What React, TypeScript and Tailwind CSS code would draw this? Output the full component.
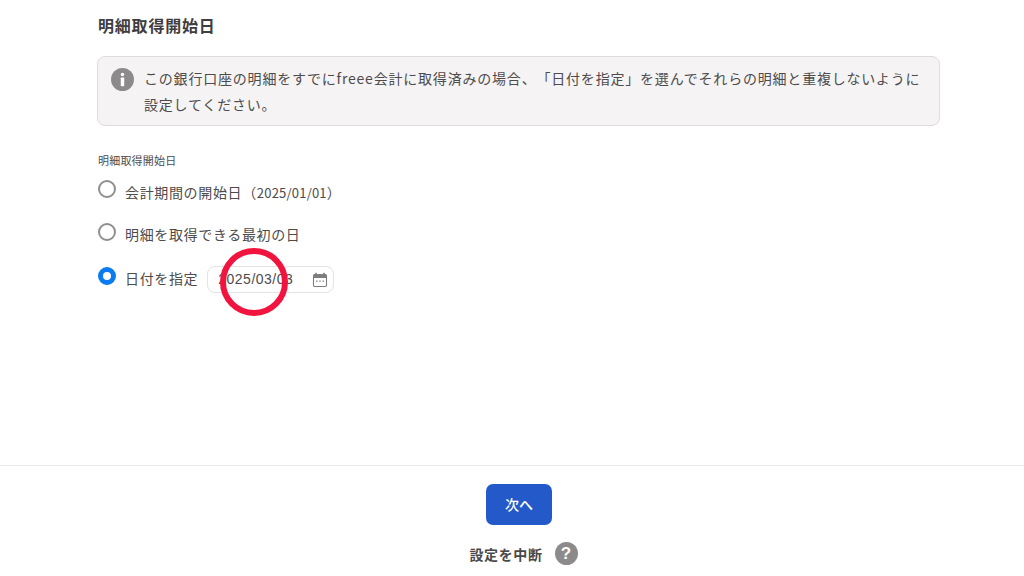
const font = { fontFamily: '"Noto Sans CJK JP", "Liberation Sans", sans-serif' };

function Radio({ checked }: { checked?: boolean }) {
  if (checked) {
    return <span className="block h-[18px] w-[18px] shrink-0 rounded-full border-[5px] border-[#0a7bf0] bg-white" />;
  }
  return <span className="block h-[18px] w-[18px] shrink-0 rounded-full border-2 border-[#8f8f8f] bg-white" />;
}

function CalendarIcon() {
  return (
    <svg viewBox="0 0 16 16" className="h-[16px] w-[16px]" fill="none">
      <rect x="3.2" y="0.8" width="1.6" height="2.5" fill="#7f7d7d" />
      <rect x="11.2" y="0.8" width="1.6" height="2.5" fill="#7f7d7d" />
      <path d="M1.5 6V3.5a1 1 0 0 1 1-1h11a1 1 0 0 1 1 1V6z" fill="#7f7d7d" />
      <rect x="1.5" y="2.5" width="13" height="12" rx="1.2" stroke="#7f7d7d" strokeWidth="1.1" />
      <rect x="4" y="8.5" width="1.6" height="1.4" fill="#9a9898" />
      <rect x="7.2" y="8.5" width="1.6" height="1.4" fill="#9a9898" />
      <rect x="10.4" y="8.5" width="1.6" height="1.4" fill="#9a9898" />
    </svg>
  );
}

export default function App() {
  return (
    <div className="flex h-[576px] w-[1024px] flex-col overflow-hidden bg-white text-[#4d4b4b] [text-spacing-trim:space-all]" style={font}>
      <main className="flex-1 pl-[97px] pr-[84px]">
        <h1 className="mt-[14px] pl-px text-[16px] font-bold leading-[22px] tracking-[0.8px] text-[#3f3d3d]">明細取得開始日</h1>

        <div className="mt-[20px] flex h-[70px] gap-[10px] rounded-[8px] border border-[#dedcdc] bg-[#f5f3f4] pl-[13px] pr-[12px] pt-[8px]">
          <svg viewBox="0 0 24 24" className="mt-[3px] h-[23px] w-[23px] shrink-0">
            <circle cx="12" cy="12" r="12" fill="#8c8a8a" />
            <circle cx="12" cy="6.8" r="1.8" fill="#fff" />
            <rect x="10.2" y="10" width="3.6" height="9" rx="0.8" fill="#fff" />
          </svg>
          <p className="text-[14px] leading-[26px] tracking-[0.8px]">
            この銀行口座の明細をすでにfreee会計に取得済みの場合、「日付を指定」を選んでそれらの明細と重複しないように設定してください。
          </p>
        </div>

        <div className="mt-[26px] pl-px text-[11px] leading-4 tracking-[0.2px]">明細取得開始日</div>

        <div className="mt-[12px] flex flex-col">
          <label className="flex h-[24px] items-start gap-[9px] pl-px">
            <Radio />
            <span className="mt-px text-[14px] leading-[22px] tracking-[0.65px]">
              会計期間の開始日（<span className="text-[13px] tracking-[0.2px]">2025/01/01</span>）
            </span>
          </label>
          <label className="mt-[19px] flex h-[24px] items-start gap-[9px] pl-px">
            <Radio />
            <span className="text-[14px] leading-[22px] tracking-[0.65px]">明細を取得できる最初の日</span>
          </label>
          <div className="relative mt-[20px] flex h-[28px] items-start pl-px">
            <Radio checked />
            <span className="ml-[9px] text-[14px] leading-[22px] tracking-[0.65px]">日付を指定</span>
            <div className="ml-[9px] -mt-px flex h-[27px] w-[127px] items-center justify-between rounded-[8px] border border-[#e4e2e2] bg-white pl-[10px] pr-[5px]">
              <span className="text-[14px] tracking-[0.5px]" style={{ fontFamily: '"Liberation Sans", sans-serif' }}>2025/03/03</span>
              <CalendarIcon />
            </div>
            <div className="absolute left-[123px] top-[-19px] h-[68px] w-[68px] rounded-full border-[6px] border-[#f0143f]" />
          </div>
        </div>
      </main>

      <footer className="flex h-[111px] flex-col items-center border-t border-[#e6e9e9]">
        <button type="button" className="ml-[14px] mt-[18px] h-[41px] w-[66px] rounded-[7px] bg-[#2459c9] text-[14px] font-medium text-white">
          次へ
        </button>
        <div className="ml-[23px] mt-[17px] flex items-center gap-[12px]">
          <span className="text-[14px] font-bold leading-[22px] tracking-[0.6px] text-[#4a4848]">設定を中断</span>
          <span className="flex h-[23px] w-[23px] items-center justify-center rounded-full bg-[#8c8a8a] text-[17px] font-bold leading-none text-white" style={{ fontFamily: '"Liberation Sans", sans-serif' }}>?</span>
        </div>
      </footer>
    </div>
  );
}
